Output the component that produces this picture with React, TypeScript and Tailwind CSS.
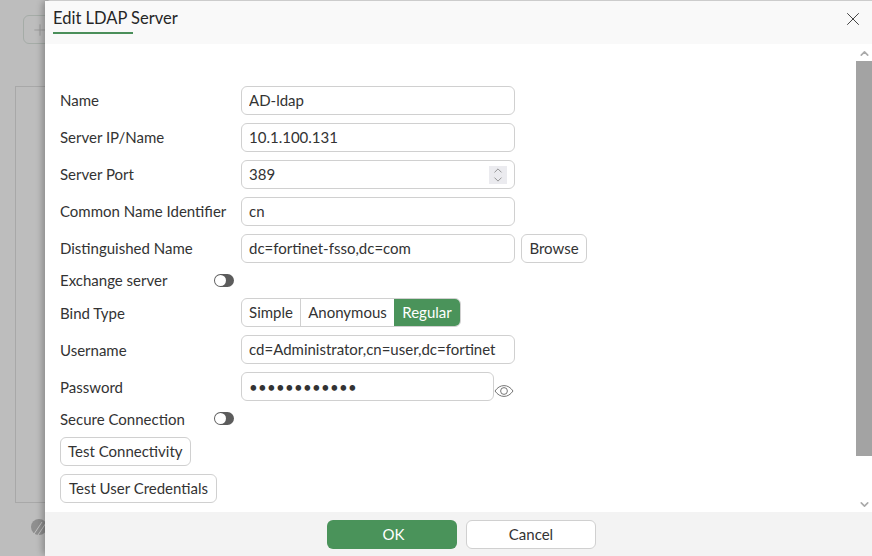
import { ChevronDown, ChevronUp, Plus, X } from 'lucide-react';

const fieldClass =
  'h-[29px] rounded-md border border-[#d0d0d0] bg-white pl-[7px] text-[15px] text-[#333] outline-none';
const inputClass = `${fieldClass} w-[274px] pb-[2px]`;
const btnClass =
  'h-[29px] rounded-md border border-[#d0d0d0] bg-white px-[7px] text-[15px] text-[#333]';

function Row({ label, low, children }: { label: string; low?: boolean; children: React.ReactNode }) {
  return (
    <div className="flex h-[29px] items-center">
      <label className={`w-[181px] shrink-0 text-[15px] text-[#333] ${low ? 'pt-[2px]' : ''}`}>{label}</label>
      {children}
    </div>
  );
}

function ToggleRow({ label, low }: { label: string; low?: boolean }) {
  return (
    <div className="flex h-[19px] items-center">
      <label className={`w-[154px] shrink-0 whitespace-nowrap text-[15px] text-[#333] ${low ? 'pt-[2px]' : ''}`}>{label}</label>
      <div className="flex h-[13px] w-5 items-center rounded-full bg-[#5c5c5c] pl-px">
        <div className="size-[11px] rounded-full bg-white" />
      </div>
    </div>
  );
}

export default function App() {
  return (
    <div className="relative h-[556px] w-[872px] overflow-hidden bg-[#bdbdbd] font-['Lato',sans-serif]">
      {/* page behind the dialog */}
      <div className="flex flex-col items-start pl-[15px] pt-[15px]">
        <div className="ml-2 flex h-[29px] w-10 items-center rounded-md border border-[#a5aca7] pl-[7px] text-[#999]">
          <Plus size={18} strokeWidth={1.25} />
        </div>
        <div className="mt-[42px] h-[417px] w-10 border border-[#a8a8a8]" />
        <svg viewBox="0 0 16 16" className="ml-4 mt-4 size-4">
          <circle cx="8" cy="8" r="8" fill="#8f8f8f" />
          <path d="M3 15 11 3M7 16 15 4" stroke="#c4c4c4" strokeWidth="1" />
        </svg>
      </div>

      <div className="absolute inset-y-0 left-[45px] right-0 flex flex-col rounded-l-md border-t border-[#cccccc] bg-white shadow-[-3px_0_6px_rgba(0,0,0,0.25)]">
        <div className="flex h-[43px] shrink-0 items-start justify-between bg-[#f9f9f9] pl-2 pr-2">
          <div className="w-20 whitespace-nowrap border-b-2 border-[#4a8f5a] pb-[2px] pt-[5px] text-[16.500px] leading-6 text-[#262626]">
            Edit LDAP Server
          </div>
          <X size={22} strokeWidth={1} className="mt-[7px] text-[#333]" />
        </div>

        <div className="flex min-h-0 flex-1">
          <div className="flex flex-1 flex-col gap-2 pl-[15px] pt-[42px]">
            <Row label="Name">
              <input readOnly value="AD-ldap" className={inputClass} />
            </Row>
            <Row label="Server IP/Name">
              <input readOnly value="10.1.100.131" className={inputClass} />
            </Row>
            <Row label="Server Port">
              <div className={`${fieldClass} flex w-[274px] items-center justify-between pr-[7px]`}>
                <span>389</span>
                <div className="flex size-[18px] flex-col items-center justify-center bg-[#ebebef] text-[#808080]">
                  <ChevronUp size={14} strokeWidth={1.5} className="-my-[2px]" />
                  <ChevronDown size={14} strokeWidth={1.5} className="-my-[2px]" />
                </div>
              </div>
            </Row>
            <Row label="Common Name Identifier">
              <input readOnly value="cn" className={inputClass} />
            </Row>
            <Row label="Distinguished Name">
              <input readOnly value="dc=fortinet-fsso,dc=com" className={inputClass} />
              <button className={`${btnClass} ml-[6px] w-[66px]`}>Browse</button>
            </Row>
            <ToggleRow label="Exchange server" />
            <Row label="Bind Type" low>
              <div className="flex h-[29px] overflow-hidden rounded-md border border-[#d0d0d0] text-[15px] text-[#333]">
                <span className="flex w-[59px] items-center justify-center border-r border-[#d0d0d0]">Simple</span>
                <span className="flex w-[93px] items-center justify-center">Anonymous</span>
                <span className="flex w-[66px] items-center justify-center bg-[#4a935a] text-white">Regular</span>
              </div>
            </Row>
            <Row label="Username" low>
              <input readOnly value="cd=Administrator,cn=user,dc=fortinet" className={inputClass} />
            </Row>
            <Row label="Password" low>
              <input readOnly type="password" value="fortinet-pwd" className={`${fieldClass} w-[253px] tracking-[0.3px]`} />
              <svg viewBox="0 0 20 14" className="mt-2 h-[14px] w-5 text-[#666]" fill="none" stroke="currentColor" strokeWidth="0.9">
                <path d="M1 7c2.500-3.600 5.500-5.400 9-5.400S16.500 3.400 19 7c-2.500 3.600-5.500 5.400-9 5.400S3.500 10.600 1 7z" />
                <circle cx="10" cy="7" r="3.400" />
              </svg>
            </Row>
            <ToggleRow label="Secure Connection" low />
            <button className={`${btnClass} mt-px w-fit`}>Test Connectivity</button>
            <button className={`${btnClass} w-[157px]`}>Test User Credentials</button>
          </div>

          <div className="flex w-4 shrink-0 flex-col items-center">
            <ChevronUp size={13} strokeWidth={3} className="mt-[2px] h-[15px] text-[#aaaaaa]" />
            <div className="h-[395px] w-4 bg-[#a3a3a3]" />
            <div className="flex-1" />
            <ChevronDown size={13} strokeWidth={3} className="mb-px text-[#aaaaaa]" />
          </div>
        </div>

        <div className="flex h-11 shrink-0 items-center justify-center gap-[9px] bg-[#f3f3f3] pl-[6px]">
          <button className="h-[29px] w-[130px] rounded-md bg-[#4a935a] pl-[3px] text-[15px] text-white">OK</button>
          <button className="h-[29px] w-[130px] rounded-md border border-[#d0d0d0] bg-white text-[15px] text-[#333]">Cancel</button>
        </div>
      </div>
    </div>
  );
}
